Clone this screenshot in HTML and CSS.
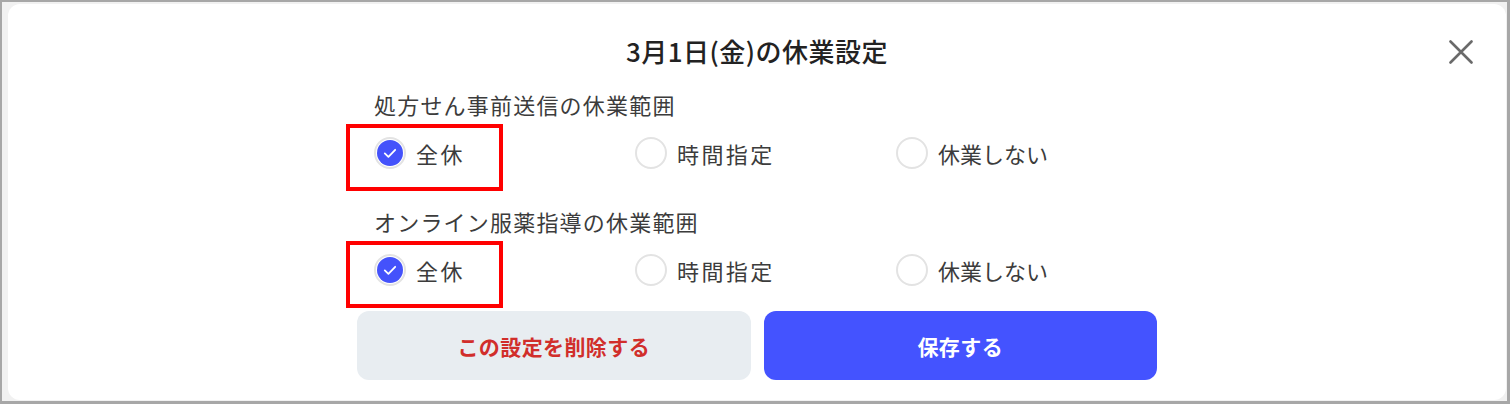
FILE: index.html
```html
<!DOCTYPE html>
<html lang="ja">
<head>
<meta charset="utf-8">
<title>休業設定</title>
<link rel="stylesheet" href="styles.css">
</head>
<body>
<div class="dialog">
  <button class="close" aria-label="閉じる">
    <svg width="24" height="24" viewBox="0 0 24 24"><path d="M1.5 1.5L22.5 22.5M22.5 1.5L1.5 22.5" stroke="#6a6a6a" stroke-width="2.6" stroke-linecap="round" fill="none"/></svg>
  </button>
  <h1 class="title">3月1日(金)の休業設定</h1>
  <div class="form">
    <div class="section">
      <div class="label">処方せん事前送信の休業範囲</div>
      <div class="options">
        <div class="opt marked"><span class="radio checked"><svg width="26" height="26" viewBox="0 0 26 26"><circle cx="13" cy="13" r="13" fill="#4452fb"/><path d="M7.8 13.4l3.6 3.4 6.8-7" stroke="#fff" stroke-width="1.8" fill="none" stroke-linecap="round" stroke-linejoin="round"/></svg></span><span class="opt-text">全休</span></div>
        <div class="opt"><span class="radio"></span><span class="opt-text">時間指定</span></div>
        <div class="opt"><span class="radio"></span><span class="opt-text kana">休業しない</span></div>
      </div>
    </div>
    <div class="section">
      <div class="label">オンライン服薬指導の休業範囲</div>
      <div class="options">
        <div class="opt marked"><span class="radio checked"><svg width="26" height="26" viewBox="0 0 26 26"><circle cx="13" cy="13" r="13" fill="#4452fb"/><path d="M7.8 13.4l3.6 3.4 6.8-7" stroke="#fff" stroke-width="1.8" fill="none" stroke-linecap="round" stroke-linejoin="round"/></svg></span><span class="opt-text">全休</span></div>
        <div class="opt"><span class="radio"></span><span class="opt-text">時間指定</span></div>
        <div class="opt"><span class="radio"></span><span class="opt-text kana">休業しない</span></div>
      </div>
    </div>
    <div class="actions">
      <button class="btn btn-delete">この設定を削除する</button>
      <button class="btn btn-save">保存する</button>
    </div>
  </div>
</div>
</body>
</html>
```

FILE: styles.css
```css
html, body {
  margin: 0;
  padding: 0;
}
body {
  box-sizing: border-box;
  width: 1510px;
  height: 404px;
  border-style: solid;
  border-color: #a7a7a7;
  border-width: 2px 3px 3px 2px;
  background: #f1f1f1;
  padding: 2px 1px 1px 6px;
  display: flex;
  font-family: "Noto Sans CJK JP", "Noto Sans", sans-serif;
  overflow: hidden;
}
.dialog {
  flex: 1;
  background: #ffffff;
  border-radius: 12px;
  position: relative;
  display: flex;
  flex-direction: column;
  align-items: center;
  padding-top: 29px;
}
.close {
  position: absolute;
  top: 36px;
  right: 33px;
  width: 24px;
  height: 24px;
  padding: 0;
  border: none;
  background: none;
  display: flex;
}
.title {
  margin: 0;
  height: 36px;
  line-height: 36px;
  font-size: 26px;
  font-weight: 500;
  color: #222222;
  letter-spacing: 0.5px;
}
.form {
  width: 800px;
  margin-top: 19px;
  display: flex;
  flex-direction: column;
}
.section {
  display: flex;
  flex-direction: column;
  padding-left: 17px;
}
.section + .section {
  margin-top: 19px;
}
.label {
  height: 32px;
  line-height: 32px;
  font-size: 22px;
  color: #3c3c3c;
  letter-spacing: 1.2px;
}
.options {
  height: 66px;
  display: grid;
  grid-template-columns: repeat(3, 1fr);
  align-items: center;
}
.opt {
  position: relative;
  display: flex;
  align-items: center;
  gap: 10px;
  height: 32px;
}
.opt.marked::after {
  content: "";
  position: absolute;
  left: -28px;
  top: -13px;
  width: 157px;
  height: 67px;
  box-sizing: border-box;
  border: 4px solid #ff0000;
}
.radio {
  box-sizing: border-box;
  width: 32px;
  height: 32px;
  border-radius: 50%;
  border: 2px solid #e3e3e3;
  display: grid;
  place-items: center;
  flex: none;
}
.radio svg {
  display: block;
}
.opt-text {
  font-size: 22px;
  line-height: 32px;
  color: #3c3c3c;
  letter-spacing: 2.4px;
}
.opt-text.kana {
  letter-spacing: 0;
}
.actions {
  margin-top: 8px;
  display: flex;
  gap: 13px;
  width: 800px;
}
.btn {
  flex: 1;
  height: 69px;
  border: none;
  border-radius: 12px;
  font-family: "Noto Sans CJK JP", "Noto Sans", sans-serif;
  font-size: 21px;
  font-weight: 700;
  letter-spacing: 0.4px;
}
.btn-delete {
  background: #e8edf1;
  color: #d12e2b;
}
.btn-save {
  background: #4453ff;
  color: #ffffff;
}
```
